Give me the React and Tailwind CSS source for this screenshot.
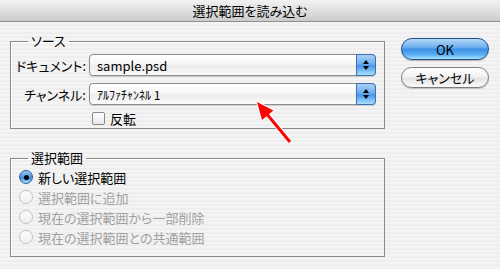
import React from 'react';

const font = "font-['Noto_Sans_CJK_JP','Noto_Sans',sans-serif] [font-feature-settings:'palt']";

const Popup = ({ children }) => (
  <div className="relative flex h-[22px] w-[287px] items-center rounded-[4px] border border-[#8c8c8c] bg-[linear-gradient(#ffffff,#f6f6f6_45%,#ececec_55%,#fbfbfb)] shadow-[0_1px_1px_rgba(0,0,0,0.15)]">
    <div className="flex-1 pl-[7px] text-[13px] leading-none text-black">{children}</div>
    {/* stepper */}
    <div className="flex h-[22px] w-[20px] -mr-px -my-px flex-col items-center justify-center gap-[2px] rounded-r-[4px] border border-[#3e6fb0] bg-[linear-gradient(#a9d0f5,#6aaef0_45%,#4a96e6_55%,#a8e0ff)]">
      <div className="h-0 w-0 border-x-[3px] border-b-[4px] border-x-transparent border-b-black" />
      <div className="h-0 w-0 border-x-[3px] border-t-[4px] border-x-transparent border-t-black" />
    </div>
  </div>
);

const Radio = ({ checked, label }) => (
  <div className="flex h-[20px] items-center gap-[5px] pl-[8px]">
    {checked ? (
      <div className="flex h-[14px] w-[14px] items-center justify-center rounded-full border border-[#2c5d9e] bg-[linear-gradient(#9cc8f2,#4d97e4_50%,#3a86da_55%,#a6e2ff)]">
        <div className="h-[5px] w-[5px] rounded-full bg-black" />
      </div>
    ) : (
      <div className="h-[14px] w-[14px] rounded-full border border-[#c2c2c2] bg-[linear-gradient(#fdfdfd,#efefef)]" />
    )}
    <span className={`text-[13px] leading-none ${checked ? 'text-black' : 'text-[#a0a0a0]'}`}>{label}</span>
  </div>
);

export default function App() {
  return (
    <div className={`relative h-[269px] w-[500px] overflow-hidden bg-[repeating-linear-gradient(180deg,#eeeeee_0px,#eeeeee_2px,#f4f4f4_2px,#f4f4f4_4px)] ${font}`}>
      {/* title bar */}
      <div className="flex h-[22px] items-center justify-center border-b border-[#8e8e8e] bg-[linear-gradient(#f2f2f2,#dcdcdc_60%,#cbcbcb)] text-[13px] leading-none text-black">
        選択範囲を読み込む
      </div>

      <div className="flex items-start">
        {/* left column */}
        <div className="pl-[10px] pt-[12px]">
          <fieldset className="w-[375px] border border-[#8a8a8a] px-0 pb-[4px] pt-0 shadow-[inset_1px_1px_0_#ffffff]">
            <legend className="ml-[17px] px-[3px] text-[13px] leading-[14px]">ソース</legend>
            <div className="mt-[6px] flex items-center gap-[3px]">
              <div className="w-[75px] text-right text-[13px] leading-none">ドキュメント:</div>
              <Popup>sample.psd</Popup>
            </div>
            <div className="mt-[7px] flex items-center gap-[3px]">
              <div className="w-[75px] text-right text-[13px] leading-none">チャンネル:</div>
              <Popup>
                <span className="text-[12px]">ｱﾙﾌｧﾁｬﾝﾈﾙ 1</span>
              </Popup>
            </div>
            <div className="mt-[7px] flex h-[12px] items-center gap-[5px] pl-[81px]">
              <div className="h-[13px] w-[13px] rounded-[2px] border border-[#8a8a8a] bg-[linear-gradient(#ffffff,#e9e9e9)]" />
              <span className="text-[13px] leading-none">反転</span>
            </div>
          </fieldset>

          <fieldset className="mt-[22px] w-[375px] border border-[#8a8a8a] px-0 pb-[9px] pt-0 shadow-[inset_1px_1px_0_#ffffff]">
            <legend className="ml-[17px] px-[3px] text-[13px] leading-[14px]">選択範囲</legend>
            <div className="mt-[2px] flex flex-col">
              <Radio checked label="新しい選択範囲" />
              <Radio label="選択範囲に追加" />
              <Radio label="現在の選択範囲から一部削除" />
              <Radio label="現在の選択範囲との共通範囲" />
            </div>
          </fieldset>
        </div>

        {/* buttons */}
        <div className="flex flex-col gap-[7px] pl-[16px] pt-[16px]">
          <button className="flex h-[22px] w-[88px] items-center justify-center rounded-full border border-[#1f4f8c] bg-[linear-gradient(#b6d8f7,#6eb0ef_40%,#3d8fe2_52%,#5fb0f2_80%,#a9e6ff)] text-[13px] leading-none text-black shadow-[0_1px_1px_rgba(0,0,0,0.25)]">
            OK
          </button>
          <button className="flex h-[21px] w-[88px] items-center justify-center rounded-full border border-[#7c7c7c] bg-[linear-gradient(#ffffff,#f3f3f3_45%,#e4e4e4_55%,#fafafa)] text-[13px] leading-none text-black shadow-[0_1px_1px_rgba(0,0,0,0.2)]">
            キャンセル
          </button>
        </div>
      </div>

      {/* red annotation arrow */}
      <svg className="pointer-events-none absolute left-0 top-0" width="500" height="269">
        <line x1="290" y1="142" x2="266" y2="113" stroke="#ffffff" strokeWidth="5" />
        <polygon points="257,102 273.5,110.5 262,120" fill="#ffffff" stroke="#ffffff" strokeWidth="2" strokeLinejoin="round" />
        <line x1="290" y1="142" x2="266" y2="113" stroke="#ff0000" strokeWidth="3" />
        <polygon points="257,102 273.5,110.5 262,120" fill="#ff0000" />
      </svg>
    </div>
  );
}
